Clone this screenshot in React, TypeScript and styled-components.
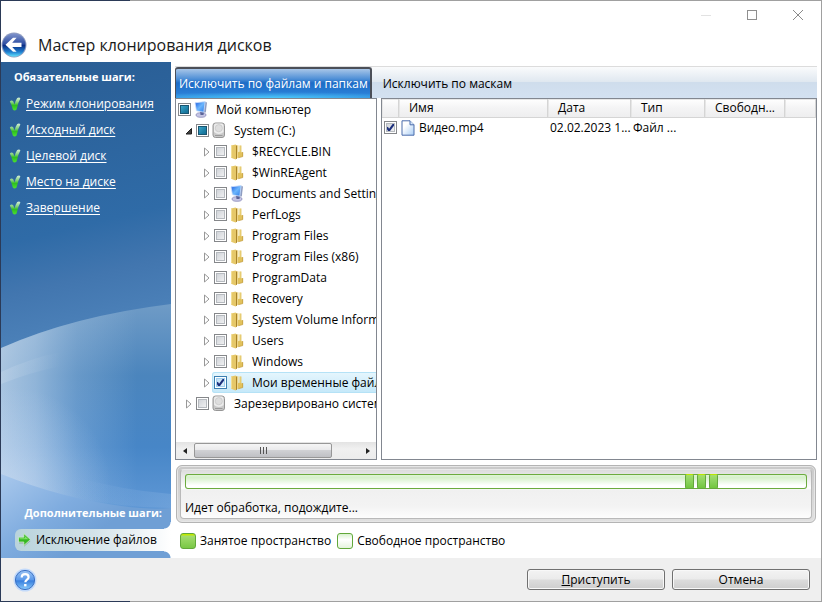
import React, { useState } from "react";
import styled, { createGlobalStyle, css } from "styled-components";

const GlobalStyle = createGlobalStyle`
  * { box-sizing: border-box; }
  body { margin: 0; background: #fff; }
  button, input { font: inherit; color: inherit; margin: 0; padding: 0; }
`;

const Window = styled.div`
  display: flex;
  flex-direction: column;
  min-height: 100vh;
  padding: 1px;
  background: linear-gradient(to right, #2b3a57 130px, #a0a0a0 130px);
  color: #000;
  font: 12px/16px "Segoe UI", "Open Sans", "Noto Sans", sans-serif;
`;

/* Title area */
const Header = styled.header`
  display: flex;
  flex-direction: column;
  height: 61px;
  background: #fff;
`;
const Caption = styled.div`
  display: flex;
  justify-content: flex-end;
  height: 28px;
`;
const CaptionButton = styled.button`
  display: grid;
  place-items: center;
  width: 46px;
  height: 28px;
  border: 0;
  background: transparent;
`;
const TitleRow = styled.div`
  display: flex;
  align-items: center;
  gap: 11px;
  height: 31px;
`;
const BackButton = styled.button`
  width: 26px;
  height: 26px;
  border: 0;
  background: transparent;
  svg { display: block; }
`;
const Title = styled.h1`
  margin: 0;
  font-size: 16px;
  line-height: 24px;
  font-weight: 400;
  color: #1a1a1a;
`;

/* Body */
const Body = styled.div`
  display: flex;
  flex: 1;
  min-height: 0;
  background: #fff;
`;
const Sidebar = styled.nav`
  position: relative;
  display: flex;
  flex-direction: column;
  flex: 0 0 170px;
  color: #fff;
`;
const Backdrop = styled.svg`
  position: absolute;
  inset: 0;
  width: 100%;
  height: 100%;
`;
const SideContent = styled.div`
  position: relative;
  display: flex;
  flex-direction: column;
  flex: 1;
  padding: 7px 0;
`;
const SideHeading = styled.h2<{ $end?: boolean }>`
  margin: ${(p) => (p.$end ? "auto 9px 8px" : "0 13px 6px")};
  font-size: 11px;
  line-height: 16px;
  font-weight: 700;
  text-align: ${(p) => (p.$end ? "right" : "left")};
  white-space: nowrap;
`;
const Steps = styled.ul`
  margin: 0;
  padding: 0;
  list-style: none;
`;
const Step = styled.li`
  display: flex;
  align-items: center;
  gap: 5px;
  height: 26px;
  padding-left: 8px;
`;
const StepLink = styled.a`
  color: #fff;
  text-underline-offset: 2px;
  white-space: nowrap;
`;
const ActiveStep = styled.a`
  position: relative;
  display: flex;
  align-items: center;
  gap: 5px;
  height: 22px;
  margin-left: 14px;
  padding-left: 3px;
  border-radius: 6px 0 0 6px;
  background: linear-gradient(to right, #b9d3dc, #d3e3e9 50%, #fff);
  color: #000;
  text-decoration: none;
  white-space: nowrap;
  &::before, &::after {
    content: "";
    position: absolute;
    right: 0;
    width: 7px;
    height: 7px;
  }
  &::before {
    bottom: 100%;
    background: radial-gradient(circle at 0 0, transparent 6px, #fff 7px);
  }
  &::after {
    top: 100%;
    background: radial-gradient(circle at 0 100%, transparent 6px, #fff 7px);
  }
`;

const Main = styled.main`
  display: flex;
  flex-direction: column;
  flex: 1;
  min-width: 0;
  padding: 4px 4px 9px;
`;
const Tabs = styled.div`
  display: flex;
  height: 32px;
  border-top: 1px solid #dcdcdc;
  background: linear-gradient(#fafbfc, #e0e8f0 47%, #cfddec 50%, #d3e1f1);
`;
const Tab = styled.button<{ $active?: boolean }>`
  border: 0;
  background: transparent;
  white-space: nowrap;
  ${(p) =>
    p.$active
      ? css`
          padding: 0 2px 0 3px;
          border: 2px solid #4b4f58;
          border-width: 2px 2px 0 1px;
          border-radius: 3px 3px 0 0;
          background: radial-gradient(ellipse 80% 6px at 50% 100%, #4bc8fa, transparent),
            linear-gradient(#a8c6e8, #4d8ed6 35%, #1d6cc6 48%, #2f86dd);
          color: #fff;
        `
      : css`
          padding: 3px 6px 0 11px;
        `}
`;
const Panes = styled.div`
  display: flex;
  flex: 1;
  gap: 4px;
  min-height: 0;
`;

/* Folder tree */
const TreePane = styled.section`
  display: flex;
  flex-direction: column;
  flex: 0 0 202px;
  border: 1px solid #828790;
  background: #fff;
  overflow: hidden;
`;
const Tree = styled.ul`
  flex: 1;
  margin: 0;
  padding: 0;
  list-style: none;
  overflow: hidden;
`;
const TreeRow = styled.li`
  display: flex;
  height: 21px;
`;
const Indent = styled.span<{ $level: number }>`
  display: flex;
  align-items: center;
  justify-content: flex-end;
  flex: 0 0 ${(p) => p.$level * 18}px;
`;
const Expander = styled.button`
  display: grid;
  place-items: center;
  width: 10px;
  height: 12px;
  border: 0;
  background: transparent;
`;
const Item = styled.label<{ $selected?: boolean }>`
  display: flex;
  align-items: center;
  flex: 1 0 auto;
  padding-left: 2px;
  border-radius: 3px 0 0 3px;
  white-space: nowrap;
  ${(p) =>
    p.$selected &&
    css`
      background: linear-gradient(#e6f6fd, #c4e8f9);
      box-shadow: inset 0 0 0 1px #b5e2f6;
    `}
`;
const ItemIcon = styled.span`
  display: grid;
  place-items: center;
  width: 16px;
  height: 18px;
  margin: 0 7px 0 2px;
`;
const tick =
  "url(\"data:image/svg+xml,%3Csvg xmlns='http://www.w3.org/2000/svg' viewBox='0 0 13 13'%3E%3Cpath d='M3 6.3l2 3.4L10 2.8' fill='none' stroke='%231c2f7c' stroke-width='2.1'/%3E%3C/svg%3E\")";
const Check = styled.input<{ $mixed?: boolean; $blue?: boolean }>`
  appearance: none;
  flex: none;
  width: 13px;
  height: 13px;
  border: 1px solid ${(p) => (p.$blue ? "#3c7fb1" : "#85878a")};
  background: ${(p) =>
    p.$mixed
      ? "linear-gradient(135deg, #4bb6d8, #1c7ea5 60%, #126184)"
      : p.$blue
        ? "linear-gradient(135deg, #b9dcf5, #e8f6fe)"
        : "linear-gradient(135deg, #c9cdd3, #f7f7f7)"};
  box-shadow: inset 0 0 0 1px #fff, inset 0 0 0 2px
    ${(p) => (p.$mixed ? "#1a5570" : p.$blue ? "#9fcff0" : "#b6babf")};
  &:checked {
    background: ${tick} -1px -1px / 13px 13px no-repeat,
      ${(p) =>
        p.$blue
          ? "linear-gradient(135deg, #b9dcf5, #e8f6fe)"
          : "linear-gradient(135deg, #c9cdd3, #f7f7f7)"};
  }
`;
const ScrollBar = styled.div`
  display: flex;
  flex: 0 0 17px;
  background: linear-gradient(#e3e3e3, #f0f0f0 40%, #ececec);
`;
const ScrollArrow = styled.button`
  display: grid;
  place-items: center;
  width: 17px;
  border: 0;
  background: transparent;
`;
const ScrollTrack = styled.div`
  display: flex;
  flex: 1;
  padding: 1px;
`;
const ScrollThumb = styled.div`
  display: grid;
  place-items: center;
  flex: 0 0 84%;
  border: 1px solid #979797;
  border-radius: 2px;
  background: linear-gradient(#f5f5f5, #e9e9eb 47%, #d0d1d4 50%, #bfc0c4);
`;

/* File list */
const ListPane = styled.section`
  flex: 1;
  min-width: 0;
  border: 1px solid #828790;
  background: #fff;
  overflow: hidden;
`;
const FileTable = styled.table`
  width: 100%;
  table-layout: fixed;
  border-collapse: separate;
  border-spacing: 0;
`;
const Col = styled.col<{ $width?: number }>`
  width: ${(p) => (p.$width ? `${p.$width}px` : "auto")};
`;
const Th = styled.th`
  height: 19px;
  padding: 0 0 0 10px;
  border: solid #d5d5d5;
  border-width: 0 1px 1px 0;
  background: linear-gradient(#fff, #f4f4f5 50%, #eeeeef);
  font-weight: 400;
  text-align: left;
  white-space: nowrap;
  overflow: hidden;
  box-shadow: inset 1px 1px 0 #e6e6e6;
`;
const Td = styled.td`
  height: 19px;
  padding: 0 0 0 2px;
  white-space: nowrap;
`;
const FileName = styled.label`
  display: flex;
  align-items: center;
  gap: 4px;
`;
const CheckCell = styled.div`
  display: flex;
`;

/* Progress */
const StatusFrame = styled.section`
  margin: 5px 1px 9px;
  padding: 3px;
  border: 1px solid #b4b4b4;
  border-radius: 6px;
  background: linear-gradient(#c9c9c9, #e0e0e0);
  box-shadow: inset 0 0 0 1px #e6e6e6;
`;
const StatusInner = styled.div`
  display: flex;
  flex-direction: column;
  height: 50px;
  padding: 4px;
  border: 1px solid #b9b9b9;
  border-top-color: #e9e9e9;
  border-radius: 4px;
  background: linear-gradient(#dcdcdc, #fff 38%, #f0f0f0 42%, #f3f3f3 75%, #fdfdfd);
`;
const Progress = styled.div`
  display: flex;
  flex: none;
  gap: 3px;
  height: 15px;
  padding-left: 80.4%;
  border-radius: 3px;
  background: linear-gradient(#e4f6dc, #d6f0cb 25%, #fff 75%);
  box-shadow: inset 0 0 0 1px #6cab3e;
`;
const Chunk = styled.span`
  width: 9px;
  border: 1px solid #64a83c;
  border-top-color: #b9e600;
  border-radius: 2px;
  background: linear-gradient(#a5de6f, #8ad25c 50%, #72c63e);
`;
const StatusText = styled.p`
  margin: 10px 0 0;
  padding-top: 1px;
`;
const Legend = styled.ul`
  display: flex;
  gap: 6px;
  height: 17px;
  margin: 0;
  padding: 0 0 0 5px;
  list-style: none;
`;
const LegendItem = styled.li`
  display: flex;
  align-items: center;
  gap: 4px;
  white-space: nowrap;
`;
const Swatch = styled.span<{ $used?: boolean }>`
  width: 16px;
  height: 16px;
  border: 1px solid #62a83a;
  border-radius: 3px;
  background: ${(p) =>
    p.$used
      ? "linear-gradient(#c2e800 1px, #a3dc70 2px, #79c845)"
      : "linear-gradient(#d9f2cf, #fff 40%, #e5f4dd)"};
`;

/* Footer */
const Footer = styled.footer`
  display: flex;
  align-items: center;
  gap: 7px;
  height: 43px;
  padding: 0 11px 0 12px;
  background: #efefef;
`;
const HelpButton = styled.button`
  width: 24px;
  height: 24px;
  margin-right: auto;
  border: 0;
  background: transparent;
  svg { display: block; }
`;
const PushButton = styled.button`
  flex: 0 0 138px;
  height: 21px;
  border: 1px solid #707070;
  border-radius: 3px;
  background: linear-gradient(#f3f3f3, #ebebeb 48%, #dcdcdc 52%, #cecece);
  box-shadow: inset 0 0 0 1px #f8f8f8;
`;

const SidebarArt = () => (
  <Backdrop viewBox="0 0 170 496" preserveAspectRatio="none" aria-hidden="true">
    <defs>
      <linearGradient id="sky" gradientUnits="userSpaceOnUse" x1="60" y1="0" x2="130" y2="290">
        <stop offset="0" stopColor="#2a5e95" />
        <stop offset="0.55" stopColor="#2f6ba7" />
        <stop offset="0.72" stopColor="#4276af" />
        <stop offset="1" stopColor="#5288bf" />
      </linearGradient>
      <linearGradient id="orb" gradientUnits="userSpaceOnUse" x1="0" y1="242" x2="0" y2="446">
        <stop offset="0" stopColor="#6f9bc6" />
        <stop offset="0.35" stopColor="#4b85bd" />
        <stop offset="0.7" stopColor="#4786c7" />
        <stop offset="1" stopColor="#5e97d5" />
      </linearGradient>
      <linearGradient id="glow" x1="0" y1="0" x2="1" y2="0">
        <stop offset="0" stopColor="#e2ebf5" stopOpacity="0.62" />
        <stop offset="0.2" stopColor="#dce8f5" stopOpacity="0.48" />
        <stop offset="0.45" stopColor="#cfe0f2" stopOpacity="0.22" />
        <stop offset="0.8" stopColor="#cfe0f2" stopOpacity="0" />
      </linearGradient>
      <radialGradient id="low" gradientUnits="userSpaceOnUse" cx="10" cy="425" r="100">
        <stop offset="0" stopColor="#dfe9f8" stopOpacity="0.4" />
        <stop offset="1" stopColor="#dfe9f8" stopOpacity="0" />
      </radialGradient>
      <linearGradient id="band" x1="0" y1="0" x2="1" y2="0">
        <stop offset="0" stopColor="#fff" stopOpacity="0.14" />
        <stop offset="1" stopColor="#fff" stopOpacity="0" />
      </linearGradient>
      <linearGradient id="floor" gradientUnits="userSpaceOnUse" x1="0" y1="412" x2="60" y2="496">
        <stop offset="0" stopColor="#a9c8ec" />
        <stop offset="0.6" stopColor="#7facdf" />
        <stop offset="1" stopColor="#6f9fd5" />
      </linearGradient>
      <linearGradient id="haze" x1="0" y1="0" x2="1" y2="0">
        <stop offset="0" stopColor="#8fb7e4" stopOpacity="0" />
        <stop offset="1" stopColor="#8fb7e4" stopOpacity="0.3" />
      </linearGradient>
    </defs>
    <rect width="170" height="496" fill="url(#sky)" />
    <path d="M0 286Q72 254 170 242V496H0Z" fill="url(#orb)" />
    <path d="M0 286Q72 254 170 242V496H0Z" fill="url(#glow)" />
    <path d="M0 286Q72 254 170 242V496H0Z" fill="url(#low)" />
    <path d="M0 310Q30 296 60 290V304Q30 310 0 322Z" fill="url(#band)" />
    <path d="M0 412Q60 436 120 444Q150 448 170 446V496H0Z" fill="url(#floor)" />
    <path d="M70 414Q120 428 170 432V446Q120 446 70 434Z" fill="url(#haze)" />
  </Backdrop>
);

const BackIcon = () => (
  <svg width="26" height="26" viewBox="0 0 26 26">
    <defs>
      <linearGradient id="bk" x1="0" y1="0" x2="0" y2="1">
        <stop offset="0" stopColor="#7f93cb" />
        <stop offset="0.45" stopColor="#2f4fa3" />
        <stop offset="0.52" stopColor="#0b2f86" />
        <stop offset="0.8" stopColor="#1e7fd0" />
        <stop offset="1" stopColor="#62e0fb" />
      </linearGradient>
    </defs>
    <circle cx="13" cy="13" r="12.5" fill="#8f9cc0" />
    <circle cx="13" cy="13" r="11.5" fill="url(#bk)" />
    <path d="M4.5 12.7L12 5.8h3.6l-4.4 4.9h9.3v4.2h-9.3l4.4 4.8H12Z" fill="#fff" />
  </svg>
);

const HelpIcon = () => (
  <svg width="24" height="24" viewBox="0 0 24 24">
    <defs>
      <linearGradient id="hp" x1="0" y1="0" x2="0" y2="1">
        <stop offset="0" stopColor="#9cc4f4" />
        <stop offset="0.48" stopColor="#5c9aea" />
        <stop offset="0.55" stopColor="#3a80de" />
        <stop offset="1" stopColor="#8acbfb" />
      </linearGradient>
    </defs>
    <circle cx="12" cy="12" r="11.5" fill="#c3dafa" />
    <circle cx="12" cy="12" r="9.6" fill="url(#hp)" stroke="#3a70c4" />
    <path d="M8.7 9.4C8.7 5 15.6 5.2 15.6 9.2C15.6 11.6 12.3 11.7 12.3 14.3" fill="none" stroke="#fff" strokeWidth="2.2" />
    <rect x="11.1" y="16" width="2.4" height="2.4" fill="#fff" />
  </svg>
);

const StepCheck = () => (
  <svg width="12" height="14" viewBox="0 0 12 14" aria-hidden="true">
    <defs>
      <linearGradient id="ck" x1="0" y1="0" x2="0" y2="1">
        <stop offset="0" stopColor="#d6efdc" />
        <stop offset="0.4" stopColor="#7ccf74" />
        <stop offset="0.6" stopColor="#2fbf1e" />
        <stop offset="1" stopColor="#4be032" />
      </linearGradient>
    </defs>
    <path d="M0.8 4.5Q2.6 2.6 4.2 4.2L5.6 7.6Q6.4 3.5 8.2 1Q10.6 -0.2 11.4 1.6Q9 5.5 7.6 12.5Q5.4 14.4 3.8 12.5Q2.8 8 0.8 4.5Z" fill="url(#ck)" />
  </svg>
);

const ArrowIcon = () => (
  <svg width="13" height="14" viewBox="0 0 13 14" aria-hidden="true">
    <path d="M1 6h5V2.5L12.5 8L6 13.8V10.5H1Z" fill="#7b9a86" opacity="0.6" />
    <path d="M0.5 4.2h5.3V0.6L12.4 6.6L5.8 12.5V9H0.5Z" fill="#36b823" stroke="#d9f2d2" strokeWidth="0.7" />
    <path d="M1.5 5.2h5.3V3L10.4 6.3H1.5Z" fill="#7fe066" />
  </svg>
);

const FolderIcon = () => (
  <svg width="14" height="16" viewBox="0 0 14 16">
    <path d="M6.500 1.200H8.500V13.600L6.500 14.600Z" fill="#ecd588" />
    <path d="M8 8.200L9.500 7.600V1.600H11.400V8.200H13V12.600L8 13.800Z" fill="#e2c25c" />
    <path d="M9.900 1.600V8" stroke="#f3e3a0" strokeWidth="0.800" />
    <path d="M12.700 8V12.600L8.400 13.700" fill="none" stroke="#c09a3c" strokeWidth="0.700" />
    <path d="M1 1.600L5.600 0.600L6.800 1.600V14.600L5.600 15.600L1 13.800Z" fill="#e6c869" />
    <path d="M6.500 1.600V14.800" stroke="#a8822a" strokeWidth="1" />
    <path d="M1.500 2V13.600" stroke="#f4e3a0" strokeWidth="0.800" />
  </svg>
);

const ComputerIcon = () => (
  <svg width="14" height="17" viewBox="0 0 14 17">
    <defs>
      <linearGradient id="scr" x1="0" y1="0" x2="1" y2="1">
        <stop offset="0" stopColor="#1d5ce0" />
        <stop offset="0.5" stopColor="#6cb6fc" />
        <stop offset="1" stopColor="#2a78e8" />
      </linearGradient>
    </defs>
    <ellipse cx="7" cy="14" rx="5" ry="2.3" fill="#c5c5e4" stroke="#8484b4" strokeWidth="0.7" />
    <path d="M6 10L10 10.5L9.5 14H6.5Z" fill="#5b6498" />
    <path d="M10.5 0.6L13 1.4L11.8 11.6L9.4 11.2Z" fill="#8e9cc0" />
    <path d="M1 1.8L11.2 0.6L9.8 11.2L2.4 9.8Z" fill="url(#scr)" stroke="#cfe0fb" strokeWidth="0.8" />
  </svg>
);

const DriveIcon = () => (
  <svg width="14" height="17" viewBox="0 0 14 17">
    <rect x="1" y="1" width="11.5" height="14.5" rx="2.5" fill="#c9c9c9" stroke="#969696" />
    <path d="M2 4Q2 1.6 4 1.6h5.5Q11.6 1.6 11.6 4V10Q7 14 2 10Z" fill="#ececec" />
    <circle cx="6.8" cy="6.2" r="3.6" fill="#dedede" stroke="#c6c6c6" strokeWidth="0.7" />
    <path d="M3 13.5h7.5" stroke="#9b9b9b" />
  </svg>
);

const FileIcon = () => (
  <svg width="14" height="16" viewBox="0 0 14 16">
    <defs>
      <linearGradient id="pg" x1="0" y1="0" x2="1" y2="1">
        <stop offset="0.3" stopColor="#fff" />
        <stop offset="1" stopColor="#a9cdf5" />
      </linearGradient>
    </defs>
    <path d="M1 0.8H9L13 4.8V15.2H1Z" fill="url(#pg)" stroke="#4a6cab" />
    <path d="M9 0.8V4.8H13" fill="#d6e6fa" stroke="#4a6cab" />
  </svg>
);

const icons = { folder: FolderIcon, computer: ComputerIcon, drive: DriveIcon };

type Node = {
  name: string;
  level: number;
  icon: keyof typeof icons;
  open?: boolean;
  mixed?: boolean;
  checked?: boolean;
};

const nodes: Node[] = [
  { name: "Мой компьютер", level: 0, icon: "computer", open: true, mixed: true },
  { name: "System (C:)", level: 1, icon: "drive", open: true, mixed: true },
  { name: "$RECYCLE.BIN", level: 2, icon: "folder" },
  { name: "$WinREAgent", level: 2, icon: "folder" },
  { name: "Documents and Settings", level: 2, icon: "computer" },
  { name: "PerfLogs", level: 2, icon: "folder" },
  { name: "Program Files", level: 2, icon: "folder" },
  { name: "Program Files (x86)", level: 2, icon: "folder" },
  { name: "ProgramData", level: 2, icon: "folder" },
  { name: "Recovery", level: 2, icon: "folder" },
  { name: "System Volume Information", level: 2, icon: "folder" },
  { name: "Users", level: 2, icon: "folder" },
  { name: "Windows", level: 2, icon: "folder" },
  { name: "Мои временные файлы", level: 2, icon: "folder", checked: true },
  { name: "Зарезервировано системой", level: 1, icon: "drive" },
];

const steps = ["Режим клонирования", "Исходный диск", "Целевой диск", "Место на диске", "Завершение"];

const TreeNode = ({ node }: { node: Node }) => {
  const [checked, setChecked] = useState(!!node.checked);
  const Icon = icons[node.icon];
  return (
    <TreeRow>
      <Indent $level={node.level}>
        {node.level > 0 && (
          <Expander aria-label={node.open ? "Свернуть" : "Развернуть"}>
            <svg width="8" height="10" viewBox="0 0 8 10">
              {node.open ? (
                <path d="M6.5 2.5V8H1Z" fill="#404040" stroke="#202020" />
              ) : (
                <path d="M1.5 1L6 5L1.5 9Z" fill="#fff" stroke="#989898" />
              )}
            </svg>
          </Expander>
        )}
      </Indent>
      <Item $selected={node.checked}>
        <Check
          type="checkbox"
          $mixed={node.mixed}
          $blue={node.checked}
          checked={checked}
          onChange={(e) => setChecked(e.target.checked)}
        />
        <ItemIcon>
          <Icon />
        </ItemIcon>
        {node.name}
      </Item>
    </TreeRow>
  );
};

export default function App() {
  return (
    <>
      <GlobalStyle />
      <Window>
        <Header>
          <Caption>
            <CaptionButton aria-label="Свернуть">
              <svg width="10" height="10"><path d="M0 5.5h10" stroke="#e2e2e2" /></svg>
            </CaptionButton>
            <CaptionButton aria-label="Развернуть">
              <svg width="10" height="10"><rect x="0.5" y="0.5" width="9" height="9" fill="none" stroke="#8f8f8f" /></svg>
            </CaptionButton>
            <CaptionButton aria-label="Закрыть">
              <svg width="10" height="10"><path d="M0 0L10 10M10 0L0 10" stroke="#8a8a8a" /></svg>
            </CaptionButton>
          </Caption>
          <TitleRow>
            <BackButton aria-label="Назад"><BackIcon /></BackButton>
            <Title>Мастер клонирования дисков</Title>
          </TitleRow>
        </Header>
        <Body>
          <Sidebar>
            <SidebarArt />
            <SideContent>
              <SideHeading>Обязательные шаги:</SideHeading>
              <Steps>
                {steps.map((s) => (
                  <Step key={s}>
                    <StepCheck />
                    <StepLink href="#">{s}</StepLink>
                  </Step>
                ))}
              </Steps>
              <SideHeading $end>Дополнительные шаги:</SideHeading>
              <ActiveStep href="#" aria-current="step">
                <ArrowIcon />
                Исключение файлов
              </ActiveStep>
            </SideContent>
          </Sidebar>
          <Main>
            <Tabs role="tablist">
              <Tab role="tab" aria-selected="true" $active>Исключить по файлам и папкам</Tab>
              <Tab role="tab" aria-selected="false">Исключить по маскам</Tab>
            </Tabs>
            <Panes>
              <TreePane>
                <Tree>
                  {nodes.map((n) => <TreeNode key={n.name} node={n} />)}
                </Tree>
                <ScrollBar>
                  <ScrollArrow aria-label="Прокрутить влево">
                    <svg width="4" height="8"><path d="M4 1V7L0 4Z" fill="#222" /></svg>
                  </ScrollArrow>
                  <ScrollTrack>
                    <ScrollThumb>
                      <svg width="8" height="7"><path d="M1.5 0v7M4.5 0v7M7.5 0v7" stroke="#555" /></svg>
                    </ScrollThumb>
                  </ScrollTrack>
                  <ScrollArrow aria-label="Прокрутить вправо">
                    <svg width="4" height="8"><path d="M0 1V7L4 4Z" fill="#222" /></svg>
                  </ScrollArrow>
                </ScrollBar>
              </TreePane>
              <ListPane>
                <FileTable>
                  <colgroup>
                    <Col $width={17} /><Col $width={149} /><Col $width={83} />
                    <Col $width={74} /><Col $width={80} /><Col />
                  </colgroup>
                  <thead>
                    <tr>
                      <Th aria-label="Выбор" />
                      <Th>Имя</Th>
                      <Th>Дата</Th>
                      <Th>Тип</Th>
                      <Th>Свободн...</Th>
                      <Th aria-label="Прочее" />
                    </tr>
                  </thead>
                  <tbody>
                    <tr>
                      <Td><CheckCell><Check type="checkbox" id="video" defaultChecked /></CheckCell></Td>
                      <Td><FileName htmlFor="video"><FileIcon />Видео.mp4</FileName></Td>
                      <Td>02.02.2023 1...</Td>
                      <Td>Файл ...</Td>
                      <Td />
                      <Td />
                    </tr>
                  </tbody>
                </FileTable>
              </ListPane>
            </Panes>
            <StatusFrame>
              <StatusInner>
                <Progress role="progressbar" aria-label="Идет обработка">
                  <Chunk /><Chunk /><Chunk />
                </Progress>
                <StatusText>Идет обработка, подождите...</StatusText>
              </StatusInner>
            </StatusFrame>
            <Legend>
              <LegendItem><Swatch $used />Занятое пространство</LegendItem>
              <LegendItem><Swatch />Свободное пространство</LegendItem>
            </Legend>
          </Main>
        </Body>
        <Footer>
          <HelpButton aria-label="Справка"><HelpIcon /></HelpButton>
          <PushButton><u>П</u>риступить</PushButton>
          <PushButton>Отмена</PushButton>
        </Footer>
      </Window>
    </>
  );
}
